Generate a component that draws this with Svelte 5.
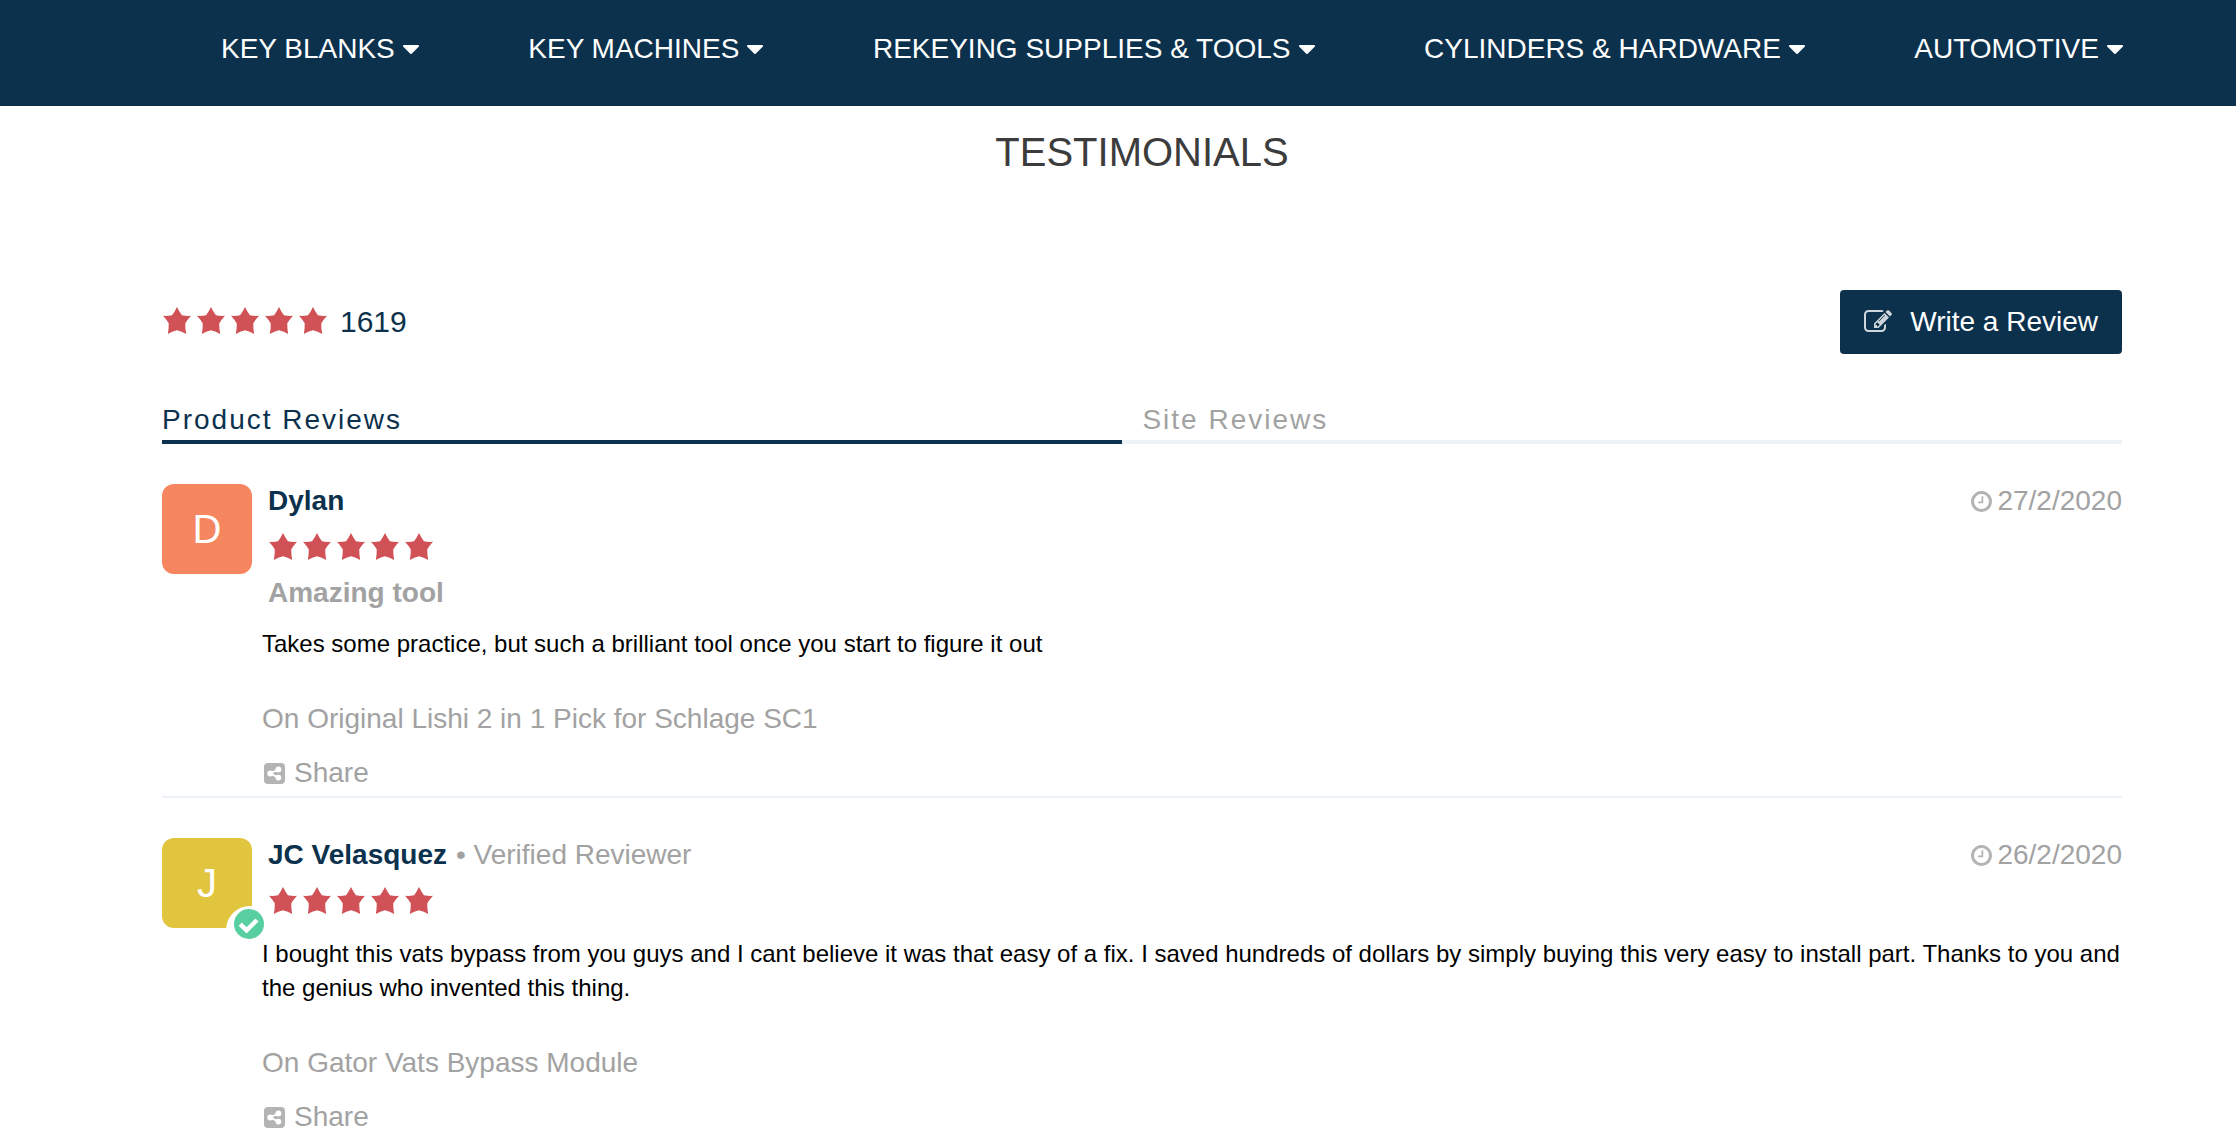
<script lang="ts">
	interface Review {
		name: string;
		initial: string;
		color: string;
		verified: boolean;
		date: string;
		title?: string;
		text: string;
		product: string;
	}

	const menu = [
		'KEY BLANKS',
		'KEY MACHINES',
		'REKEYING SUPPLIES & TOOLS',
		'CYLINDERS & HARDWARE',
		'AUTOMOTIVE'
	];

	const reviews: Review[] = [
		{
			name: 'Dylan',
			initial: 'D',
			color: '#f6865f',
			verified: false,
			date: '27/2/2020',
			title: 'Amazing tool',
			text: 'Takes some practice, but such a brilliant tool once you start to figure it out',
			product: 'Original Lishi 2 in 1 Pick for Schlage SC1'
		},
		{
			name: 'JC Velasquez',
			initial: 'J',
			color: '#e2c53e',
			verified: true,
			date: '26/2/2020',
			text: 'I bought this vats bypass from you guys and I cant believe it was that easy of a fix. I saved hundreds of dollars by simply buying this very easy to install part. Thanks to you and the genius who invented this thing.',
			product: 'Gator Vats Bypass Module'
		}
	];

	let activeTab = $state('product');
</script>

{#snippet stars()}
	<div class="stars" role="img" aria-label="5 out of 5 stars">
		{#each [1, 2, 3, 4, 5] as n (n)}
			<svg width="28" height="30" viewBox="0 0 28 30">
				<path d="M14 0Q16 4.4 18.9 8.2Q23.4 9.2 28 8.8Q24.6 12.4 22.2 16.6Q22.2 21.8 23.2 26.9Q18.8 24.4 14 23.2Q9.2 24.4 4.8 26.9Q5.8 21.8 5.8 16.6Q3.4 12.4 0 8.8Q4.6 9.2 9.1 8.2Q12 4.4 14 0z" />
			</svg>
		{/each}
	</div>
{/snippet}

<nav>
	{#each menu as item (item)}
		<a href="#menu">
			{item}
			<svg width="16" height="9" viewBox="384 640 1024 576">
				<path d="M1408 704q0 26-19 45l-448 448q-19 19-45 19t-45-19l-448-448q-19-19-19-45t19-45 45-19h896q26 0 45 19t19 45z" />
			</svg>
		</a>
	{/each}
</nav>

<main>
	<h1>TESTIMONIALS</h1>

	<div class="summary">
		{@render stars()}
		<span class="count">1619</span>
		<button class="write">
			<svg width="28" height="28" viewBox="0 0 1792 1792">
				<path d="M888 1184l116-116-152-152-116 116v56h96v96h56zm440-720q-16-16-33 1l-350 350q-17 17-1 33t33-1l350-350q17-17 1-33zm80 594v190q0 119-84.5 203.5t-203.5 84.5h-832q-119 0-203.5-84.5t-84.5-203.5v-832q0-119 84.5-203.5t203.5-84.5h832q63 0 117 25 15 7 18 23 3 17-9 29l-49 49q-14 14-32 8-23-6-45-6h-832q-66 0-113 47t-47 113v832q0 66 47 113t113 47h832q66 0 113-47t47-113v-126q0-13 9-22l64-64q15-15 35-7t20 29zm-96-738l288 288-672 672h-288v-288zm444 132l-92 92-288-288 92-92q28-28 68-28t68 28l152 152q28 28 28 68t-28 68z" />
			</svg>
			Write a Review
		</button>
	</div>

	<div class="tabs">
		<button class:active={activeTab === 'product'} onclick={() => (activeTab = 'product')}>
			Product Reviews
		</button>
		<button class:active={activeTab === 'site'} onclick={() => (activeTab = 'site')}>
			Site Reviews
		</button>
	</div>

	{#each reviews as review (review.name)}
		<article>
			<header>
				<div class="avatar" style="background: {review.color}">
					{review.initial}
					{#if review.verified}
						<svg class="badge" width="48" height="48" viewBox="0 0 48 48">
							<circle cx="24" cy="24" r="24" fill="#fff" />
							<circle cx="23" cy="18" r="15" fill="#57cfa0" />
							<path d="M14.2 18.2l6.4 6.2 10.4-10.4" fill="none" stroke="#fff" stroke-width="4.4" />
						</svg>
					{/if}
				</div>
				<div class="who">
					<div class="line">
						<strong>{review.name}</strong>
						{#if review.verified}
							<span>• Verified Reviewer</span>
						{/if}
						<time>
							<svg width="21" height="21" viewBox="128 128 1536 1536">
								<path d="M1024 544v448q0 14-9 23t-23 9h-320q-14 0-23-9t-9-23v-64q0-14 9-23t23-9h224v-352q0-14 9-23t23-9h64q14 0 23 9t9 23zm416 352q0-148-73-273t-198-198-273-73-273 73-198 198-73 273 73 273 198 198 273 73 273-73 198-198 73-273zm224 0q0 209-103 385.5t-279.5 279.5-385.5 103-385.5-103-279.5-279.5-103-385.5 103-385.5 279.5-279.5 385.5-103 385.5 103 279.5 279.5 103 385.5z" />
							</svg>
							{review.date}
						</time>
					</div>
					{@render stars()}
					{#if review.title}
						<h2>{review.title}</h2>
					{/if}
				</div>
			</header>
			<div class="body">
				<p>{review.text}</p>
				<a class="product" href="#product">On {review.product}</a>
				<button class="share">
					<svg width="21" height="21" viewBox="0 0 21 21">
						<rect width="21" height="21" rx="4" fill="#b4b4b4" />
						<g fill="#fff">
							<circle cx="6.2" cy="10.5" r="2.9" />
							<circle cx="14.4" cy="6.4" r="2.9" />
							<circle cx="14.4" cy="14.6" r="2.9" />
						</g>
						<path d="M14.4 6.4l-8.2 4.1 8.2 4.1" fill="none" stroke="#fff" stroke-width="1.8" />
					</svg>
					Share
				</button>
			</div>
		</article>
	{/each}
</main>

<style>
	:global(body) {
		margin: 0;
		background: #fff;
		font-family: 'Liberation Sans', Arial, sans-serif;
		font-size: 28px;
		line-height: 32px;
	}

	button {
		font: inherit;
		background: none;
		border: none;
		padding: 0;
		cursor: pointer;
	}

	nav {
		display: flex;
		justify-content: space-between;
		padding: 33px 113px 41px 221px;
		background: #0c314d;
	}

	nav a {
		display: flex;
		align-items: center;
		gap: 8px;
		color: #fff;
		fill: #fff;
		text-decoration: none;
		white-space: nowrap;
	}

	main {
		padding: 22px 114px 0 162px;
	}

	h1 {
		margin: 0;
		font-size: 40px;
		font-weight: normal;
		line-height: 48px;
		text-align: center;
		color: #3c3c3c;
	}

	.summary {
		display: flex;
		align-items: center;
		margin-top: 114px;
	}

	.stars {
		display: flex;
		gap: 6px;
		margin-left: 1px;
		fill: #d05257;
	}

	.count {
		margin-left: 13px;
		font-size: 30px;
		color: #0c314d;
	}

	.write {
		display: flex;
		align-items: center;
		gap: 18px;
		margin-left: auto;
		padding: 16px 24px;
		border-radius: 4px;
		background: #0c314d;
		color: #fff;
	}

	.write svg {
		fill: #ced6db;
	}

	.tabs {
		display: grid;
		grid-template-columns: 49fr 51fr;
		margin-top: 50px;
		margin-bottom: 40px;
	}

	.tabs button {
		padding-bottom: 4px;
		border-bottom: 4px solid #ecf2f8;
		color: #a2a2a2;
		letter-spacing: 2px;
		text-align: left;
	}

	.tabs button + button {
		padding-left: 20px;
	}

	.tabs button.active {
		border-color: #0c314d;
		color: #0c314d;
	}

	article {
		margin-bottom: 40px;
		padding-bottom: 7px;
		border-bottom: 2px solid #ecf2f8;
		color: #a2a2a2;
	}

	article:last-child {
		margin-bottom: 0;
		padding-bottom: 0;
		border-bottom: none;
	}

	header {
		display: flex;
		align-items: flex-start;
		gap: 16px;
	}

	.avatar {
		position: relative;
		flex: none;
		width: 90px;
		margin-bottom: -12px;
		border-radius: 12px;
		font-size: 40px;
		line-height: 90px;
		text-align: center;
		color: #fff;
	}

	.badge {
		position: absolute;
		right: -22px;
		bottom: -26px;
	}

	.who {
		flex: 1;
		padding-top: 1px;
	}

	.line {
		display: flex;
		gap: 9px;
	}

	strong {
		color: #0c314d;
	}

	time {
		display: flex;
		align-items: center;
		gap: 5px;
		margin-left: auto;
	}

	time svg {
		fill: #b4b4b4;
	}

	.who .stars {
		margin-top: 16px;
		margin-bottom: 2px;
	}

	h2 {
		margin: 14px 0 0;
		font-size: 28px;
		line-height: 32px;
	}

	/* keeps the text above the white ring of the badge */
	.body {
		position: relative;
		display: flex;
		flex-direction: column;
		align-items: flex-start;
		margin: 18px 0 0 100px;
	}

	p {
		margin: 0 0 42px;
		font-size: 24px;
		line-height: 34px;
		color: #000;
	}

	.product {
		color: inherit;
		text-decoration: none;
	}

	.share {
		display: flex;
		align-items: center;
		gap: 9px;
		margin-top: 22px;
		padding-left: 2px;
		color: inherit;
	}
</style>
